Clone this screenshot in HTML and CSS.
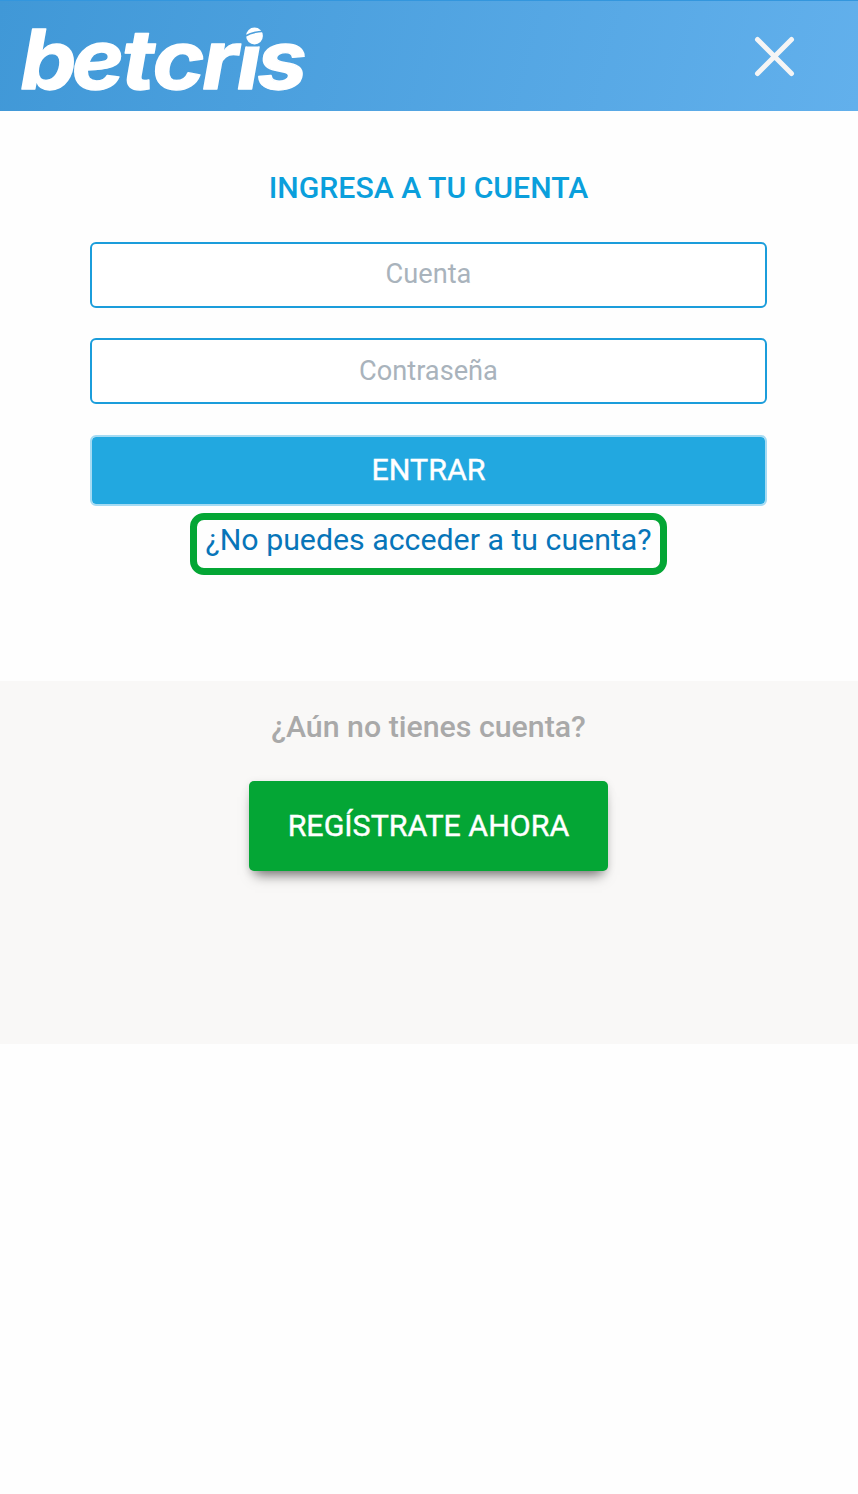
FILE: index.html
```html
<!DOCTYPE html>
<html lang="es">
<head>
<meta charset="utf-8">
<title>Betcris - Ingresa a tu cuenta</title>
<link rel="stylesheet" href="styles.css">
</head>
<body>
<header class="topbar">
  <svg class="logo" width="330" height="111" viewBox="0 0 330 111" role="img" aria-label="betcris">
    <defs>
      <!-- leaves out the dot of the i, which the ball replaces -->
      <clipPath id="no-dot"><path d="M0 0H236V42H243V46.500H262V42H330V111H0Z"/></clipPath>
    </defs>
    <g clip-path="url(#no-dot)">
      <text class="logo-text" transform="scale(1.08 1)" y="89.500" x="18.900 66.400 113 141.200 187.200 219.500 238.200">betcris</text>
    </g>
    <circle cx="254.5" cy="36" r="8.4" fill="#fff"/>
    <path class="logo-slit" d="M245 36.200Q253 31.500 264 31.200"/>
  </svg>
  <button class="close" aria-label="Cerrar">
    <svg width="42" height="42" viewBox="0 0 42 42"><path d="M3.5 3.5 37.5 37.5M37.5 3.5 3.5 37.5"/></svg>
  </button>
</header>
<main>
  <form class="login">
    <h1 class="title">INGRESA A TU CUENTA</h1>
    <input class="field" type="text" placeholder="Cuenta">
    <input class="field" type="password" placeholder="Contraseña">
    <button class="submit" type="button">ENTRAR</button>
    <a class="recover"><span>¿No puedes acceder a tu cuenta?</span></a>
  </form>
  <section class="signup">
    <p class="question">¿Aún no tienes cuenta?</p>
    <button class="register">REGÍSTRATE AHORA</button>
  </section>
</main>
</body>
</html>
```

FILE: styles.css
```css
* { box-sizing: border-box; }
body {
  margin: 0;
  min-height: 1494px;
  background: #fefefe;
  font-family: Roboto, sans-serif;
}
button { font-family: inherit; padding: 0; border: 0; }
.topbar {
  height: 111px;
  display: flex;
  justify-content: space-between;
  align-items: flex-start;
  padding-right: 62px;
  background: linear-gradient(105deg, #4098d7 0%, #62b0ec 100%);
  box-shadow: inset 0 1px 0 #3396dd;
}
.logo { display: block; }
.logo-text {
  font: italic 700 82px Inter, sans-serif;
  fill: #fff;
  stroke: #fff;
  stroke-width: 1.4;
  stroke-linejoin: round;
}
.logo-slit { fill: none; stroke: #4c9fdc; stroke-width: 1.6; }
.close { background: none; margin-top: 36px; height: 42px; }
.close svg { display: block; }
.close path { stroke: #f5f5f5; stroke-width: 5; stroke-linecap: round; }
.login {
  height: 570px;
  display: flex;
  flex-direction: column;
  align-items: center;
  padding: 59px 91px 0 90px;
}
.title {
  margin: 0 0 35.5px;
  font-size: 30.2px;
  line-height: 36px;
  font-weight: 500;
  color: #0a9fdc;
}
.field {
  width: 100%;
  height: 66px;
  margin: 0 0 30.5px;
  padding: 0 0 1px;
  border: 2px solid #1b9ddb;
  border-radius: 6px;
  background: #fff;
  font: 27.2px Roboto, sans-serif;
  text-align: center;
}
.field::placeholder { color: #a9b3bc; opacity: 1; }
.submit {
  width: 100%;
  height: 71px;
  padding-bottom: 2px;
  border: 2px solid #a5dbf3;
  border-radius: 6px;
  background: #22a8e0;
  background-clip: padding-box;
  color: #fff;
  font-size: 30.4px;
  font-weight: 400;
  -webkit-text-stroke: .4px #fff;
}
.recover {
  margin-top: 7.5px;
  width: 477px;
  height: 62px;
  border: 7px solid #04a635;
  border-radius: 14px;
  font-size: 30.3px;
  line-height: 39px;
  text-align: center;
  white-space: nowrap;
  color: #0775b9;
}
.signup {
  height: 363px;
  background: #f9f8f7;
  display: flex;
  flex-direction: column;
  align-items: center;
  padding: 28px 1px 0 0;
}
.question {
  margin: 0 0 36px;
  font-size: 30.3px;
  line-height: 36px;
  font-weight: 500;
  color: #a9a9a9;
}
.register {
  width: 359px;
  height: 90px;
  padding-bottom: 2px;
  border-radius: 5px;
  background: #04a635;
  color: #fff;
  font-size: 30.4px;
  font-weight: 400;
  -webkit-text-stroke: .4px #fff;
  box-shadow: 0 10px 12px -6px rgba(0, 0, 0, .5), 0 2px 8px rgba(0, 0, 0, .1);
}
```
